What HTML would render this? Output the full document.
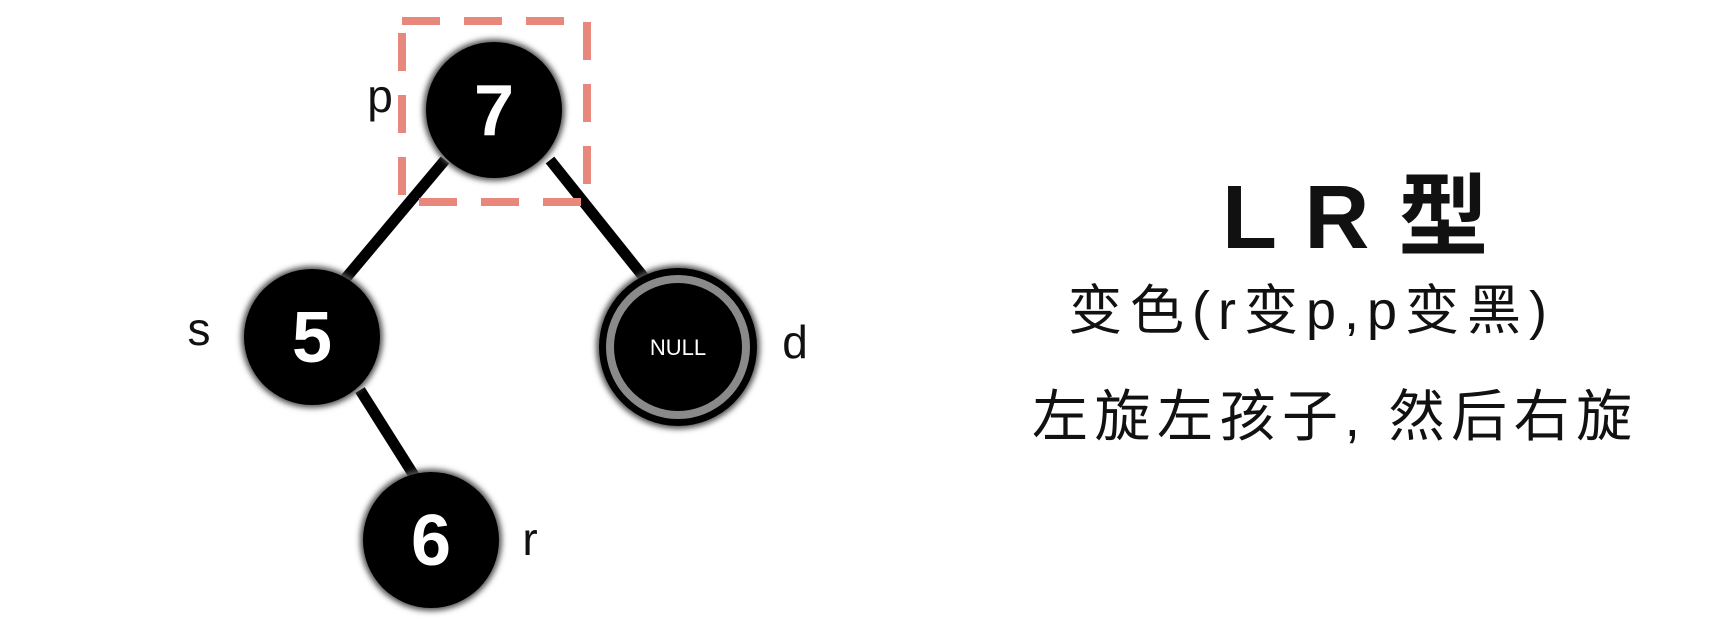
<!DOCTYPE html>
<html><head><meta charset="utf-8"><style>
html,body{margin:0;padding:0;background:#fff;}
body{width:1720px;height:642px;position:relative;overflow:hidden;font-family:"Liberation Sans","Noto Sans CJK SC",sans-serif;}
.t{position:absolute;white-space:nowrap;color:#111;}
</style></head><body>
<svg width="1720" height="642" style="position:absolute;left:0;top:0">
<defs><filter id="b" x="-30%" y="-30%" width="160%" height="160%"><feGaussianBlur stdDeviation="3"/></filter></defs>
<g stroke="#000" stroke-width="11">
<line x1="445" y1="160" x2="340" y2="285"/>
<line x1="550" y1="160" x2="650" y2="285"/>
<line x1="360" y1="390" x2="420" y2="485"/>
</g>
<g fill="#000">
<circle cx="494" cy="110" r="71" fill="#555" filter="url(#b)"/>
<circle cx="494" cy="110" r="68"/>
<circle cx="312" cy="337" r="71" fill="#555" filter="url(#b)"/>
<circle cx="312" cy="337" r="68"/>
<circle cx="431" cy="540" r="71" fill="#555" filter="url(#b)"/>
<circle cx="431" cy="540" r="68"/>
<circle cx="678" cy="347" r="82" fill="#555" filter="url(#b)"/>
<circle cx="678" cy="347" r="79"/>
<circle cx="678" cy="347" r="68" fill="none" stroke="#8a8a8a" stroke-width="8"/>
</g>
<rect x="402" y="21" width="185" height="181" fill="none" stroke="#e8887c" stroke-width="8" stroke-dasharray="38 24"/>
<g fill="#fff" font-family="Liberation Sans, sans-serif" font-weight="bold" text-anchor="middle">
<text x="494" y="135" font-size="72">7</text>
<text x="312" y="362" font-size="72">5</text>
<text x="431" y="565" font-size="72">6</text>
<text x="678" y="355" font-size="22" font-weight="normal">NULL</text>
</g>
<g fill="#111" font-family="Liberation Sans, sans-serif" font-size="46" text-anchor="middle">
<text x="380" y="112">p</text>
<text x="199" y="345">s</text>
<text x="795" y="358">d</text>
<text x="530" y="555">r</text>
</g>
</svg>
<div class="t" style="left:1222px;top:144px;font-size:90px;font-weight:bold;letter-spacing:2px;">L R 型</div>
<div class="t" style="left:1068px;top:266px;font-size:54px;letter-spacing:8px;">变色(r变p,p变黑)</div>
<div class="t" style="left:1032px;top:372px;font-size:56px;letter-spacing:6.5px;">左旋左孩子, 然后右旋</div>
</body></html>
